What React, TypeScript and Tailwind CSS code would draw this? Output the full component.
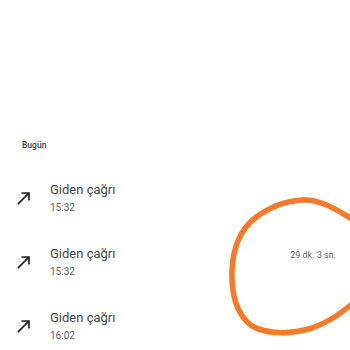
const calls = [
  { label: "Giden çağrı", time: "15:32", duration: "" },
  { label: "Giden çağrı", time: "15:32", duration: "29 dk. 3 sn." },
  { label: "Giden çağrı", time: "16:02", duration: "" },
];

function CallMadeIcon() {
  return (
    <svg width="20" height="20" viewBox="0 0 24 24" fill="#202124">
      <path d="M9 5v2h6.59L4 18.59 5.41 20 17 8.41V15h2V5z" />
    </svg>
  );
}

export default function App() {
  return (
    <div className="relative w-[350px] h-[350px] overflow-hidden bg-white font-['Roboto',sans-serif]">
      <div className="pt-[139px]">
        <div className="pl-[22px] text-[8.5px] font-medium text-[#3c4043] h-[12px] leading-[12px]">Bugün</div>
        <div className="mt-[15px] flex flex-col">
          {calls.map((c, i) => (
            <div key={i} className="flex items-center h-[64px]">
              <div className="w-[50px] pl-[14px] flex items-center">
                <CallMadeIcon />
              </div>
              <div className="flex flex-col">
                <span className="text-[13px] leading-[16px] text-[#444746]">{c.label}</span>
                <span className="text-[10px] leading-[14px] mt-[3px] text-[#5f6368]">{c.time}</span>
              </div>
              <div className="ml-auto pr-[14px] mb-[13px] text-[9px] text-[#5f6368]">{c.duration}</div>
            </div>
          ))}
        </div>
      </div>
      <svg className="absolute left-0 top-0" width="350" height="350" viewBox="0 0 350 350" fill="none">
        <path
          d="M352 219 C340 212 322 199 303 200 C285 201 268 208 255 218 C240 230 233 248 232 270 C231 292 236 315 252 326 C268 335 292 334 312 328 C330 322 342 312 352 304"
          stroke="#f57a2b"
          strokeWidth="5.5"
          strokeLinecap="round"
        />
      </svg>
    </div>
  );
}
